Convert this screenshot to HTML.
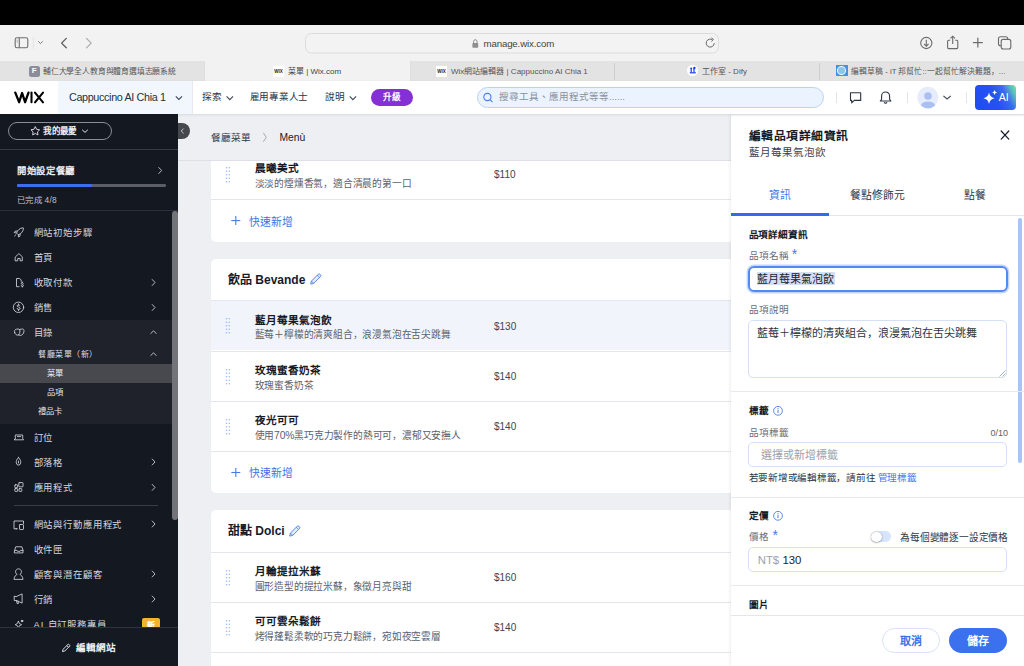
<!DOCTYPE html>
<html lang="zh-TW">
<head>
<meta charset="utf-8">
<style>
*{margin:0;padding:0;box-sizing:border-box}
html,body{width:1024px;height:666px;overflow:hidden;background:#000}
body{font-family:"Liberation Sans",sans-serif;position:relative;color:#1a1d26;text-spacing-trim:space-all}
.a{position:absolute;white-space:nowrap}
.t{position:absolute;white-space:nowrap;height:16px;line-height:16px;transform:translateY(0.7px)}
svg{position:absolute;overflow:visible}
#topblack{left:0;top:0;width:1024px;height:25px;background:#000}
#toolbar{left:0;top:25px;width:1024px;height:36px;background:#f3f2f2}
#tabs{left:0;top:61px;width:1024px;height:20px;background:#e4e3e3}
#wixhdr{left:0;top:81px;width:1024px;height:33px;background:#fff;z-index:5;box-shadow:0 1px 2.5px rgba(20,30,50,0.10)}
#sidebar{left:0;top:114px;width:178px;height:552px;background:#141821;overflow:hidden}
#main{left:178px;top:114px;width:553px;height:552px;background:#edeff3;overflow:hidden}
#panel{left:731px;top:114px;width:293px;height:552px;background:#fff;overflow:hidden;box-shadow:-1px 0 3px rgba(0,0,0,0.08)}
.tab{position:absolute;top:0;height:20px;font-size:8px;color:#555}
.tabsep{position:absolute;top:2px;width:1px;height:17px;background:#cfcfcf}
.sbi{color:#d3d6dc;font-size:9.4px;letter-spacing:0.85px}
.chev{color:#c9ccd2}
.card{position:absolute;left:33px;width:560px;background:#fff;border-radius:5px}
.row{position:absolute;left:0;width:560px;height:50px;border-top:1px solid #e3e6ec}
.nm{font-size:10.6px;font-weight:bold;color:#161b2a}
.ds{font-size:9.7px;color:#5b606b;letter-spacing:-0.2px}
.pr{font-size:10px;color:#3e4350}
.lbl{font-size:9.6px;color:#686d78}
.sec{font-size:9.6px;font-weight:bold;color:#161b2a}
.hsep{position:absolute;left:0;width:293px;height:1px;background:#e6e9ef}
</style>
</head>
<body>
<div class="a" id="topblack"></div>

<!-- Safari toolbar -->
<div class="a" id="toolbar">
  <svg style="left:0;top:0" width="1024" height="36">
    <!-- sidebar icon -->
    <rect x="15.2" y="12.8" width="12.6" height="10" rx="1.8" fill="none" stroke="#6e6e6e" stroke-width="1.1"/>
    <line x1="19.3" y1="12.8" x2="19.3" y2="22.8" stroke="#6e6e6e" stroke-width="1.1"/>
    <line x1="16.6" y1="15.2" x2="18" y2="15.2" stroke="#8a8a8a" stroke-width="0.7"/>
    <line x1="16.6" y1="17" x2="18" y2="17" stroke="#8a8a8a" stroke-width="0.7"/>
    <line x1="33.3" y1="12" x2="33.3" y2="24" stroke="#e0e0e0" stroke-width="0.8"/>
    <polyline points="38.2,16.3 40.5,18.6 42.8,16.3" fill="none" stroke="#7a7a80" stroke-width="1"/>
    <!-- back / forward -->
    <polyline points="66.3,13.4 61.6,18.1 66.3,22.8" fill="none" stroke="#5a5a5a" stroke-width="1.3" stroke-linejoin="round" stroke-linecap="round"/>
    <polyline points="86.5,13.4 91.2,18.1 86.5,22.8" fill="none" stroke="#a8a8a8" stroke-width="1.1" stroke-linejoin="round" stroke-linecap="round"/>
    <!-- address bar -->
    <rect x="305.5" y="8.5" width="413" height="19.5" rx="6" fill="#f4f3f3" stroke="#dddcdc" stroke-width="1"/>
    <!-- lock -->
    <rect x="472.4" y="18" width="5.8" height="4.8" rx="0.8" fill="#8e8e8e"/>
    <path d="M473.6 18 v-1.6 a1.7 1.7 0 0 1 3.4 0 v1.6" fill="none" stroke="#8e8e8e" stroke-width="1"/>
    <!-- reload -->
    <path d="M714.2 18.2 a4 4 0 1 1 -1.6 -3.3" fill="none" stroke="#6a6a6a" stroke-width="1"/>
    <polyline points="711.4,12.6 713.4,14.6 711.4,16.4" fill="none" stroke="#6a6a6a" stroke-width="1"/>
    <!-- download -->
    <circle cx="926.3" cy="18" r="5.6" fill="none" stroke="#6a6a6a" stroke-width="1.1"/>
    <line x1="926.3" y1="14.8" x2="926.3" y2="21" stroke="#6a6a6a" stroke-width="1.1"/>
    <polyline points="924,18.8 926.3,21.1 928.6,18.8" fill="none" stroke="#6a6a6a" stroke-width="1.1"/>
    <!-- share -->
    <path d="M950.2 15.2 h-1.6 a1 1 0 0 0 -1 1 v6.4 a1 1 0 0 0 1 1 h8.2 a1 1 0 0 0 1 -1 v-6.4 a1 1 0 0 0 -1 -1 h-1.6" fill="none" stroke="#6a6a6a" stroke-width="1.1"/>
    <line x1="952.7" y1="11.2" x2="952.7" y2="19" stroke="#6a6a6a" stroke-width="1.1"/>
    <polyline points="950.5,13.4 952.7,11.2 954.9,13.4" fill="none" stroke="#6a6a6a" stroke-width="1.1"/>
    <!-- plus -->
    <line x1="972.9" y1="17.6" x2="982.8" y2="17.6" stroke="#6a6a6a" stroke-width="1.2"/>
    <line x1="977.85" y1="12.8" x2="977.85" y2="22.4" stroke="#6a6a6a" stroke-width="1.2"/>
    <!-- tabs overview -->
    <rect x="998.5" y="11.8" width="9.2" height="9" rx="2" fill="none" stroke="#6a6a6a" stroke-width="1.1"/>
    <rect x="1001.2" y="14.4" width="9.6" height="9.6" rx="2" fill="#f3f2f2" stroke="#6a6a6a" stroke-width="1.1"/>
  </svg>
  <div class="t" style="left:483.5px;top:10.4px;font-size:9.7px;letter-spacing:-0.15px;color:#444">manage.wix.com</div>
</div>

<!-- Tabs -->
<div class="a" id="tabs">
  <div class="a" style="left:205px;top:0;width:204.5px;height:20px;background:#f3f2f2;box-shadow:-0.5px 0 0 #d9d9d9,0.5px 0 0 #d9d9d9"></div>
  <div class="tabsep" style="left:614px"></div>
  <div class="tabsep" style="left:819px"></div>
  <div class="a" style="left:29px;top:5px;width:10.5px;height:10.5px;border-radius:2.5px;background:#8b8b99;color:#fff;font-size:8px;font-weight:bold;line-height:10.5px;text-align:center">F</div>
  <div class="t" style="left:43px;top:2.3px;font-size:7.8px;letter-spacing:-0.18px;color:#555">輔仁大學全人教育與體育選填志願系統</div>
  <div class="a" style="left:273px;top:4.5px;width:11px;height:11px;background:#fff;font-size:4.5px;font-weight:bold;line-height:11px;text-align:center;color:#222">WIX</div>
  <div class="t" style="left:288px;top:2.3px;font-size:8px;color:#444">菜單 | Wix.com</div>
  <div class="a" style="left:436px;top:4.5px;width:11px;height:11px;background:#fff;font-size:4.5px;font-weight:bold;line-height:11px;text-align:center;color:#222">WIX</div>
  <div class="t" style="left:451px;top:2.3px;font-size:8px;color:#555">Wix網站編輯器 | Cappuccino AI Chia 1</div>
  <div class="a" style="left:687px;top:4.3px;width:10.6px;height:10.6px;border-radius:50%;background:#fff"><svg style="left:0;top:0" width="11" height="11"><g fill="#1f3df2"><rect x="2.8" y="7.2" width="6" height="1.2"/><rect x="3.6" y="4.2" width="1.2" height="3.2"/><rect x="6.4" y="3.2" width="1.2" height="4.2"/><circle cx="4.2" cy="3.6" r="1"/><circle cx="7.4" cy="3" r="1.2"/></g></svg></div>
  <div class="t" style="left:702px;top:2.3px;font-size:8px;color:#555">工作室 - Dify</div>
  <div class="a" style="left:836.3px;top:4px;width:11.6px;height:11.4px;background:#3f95e3"><div class="a" style="left:1.2px;top:1.4px;width:9px;height:8.6px;border-radius:50%;background:#8cc5f0;border:1.2px solid #f4f9fd"></div></div>
  <div class="t" style="left:851px;top:2.3px;font-size:7.8px;color:#555">編輯草稿 - iT 邦幫忙::一起幫忙解決難題<span lang="zh-CN">，</span>...</div>
</div>

<!-- Wix header -->
<div class="a" id="wixhdr">
  <svg style="left:0;top:0" width="60" height="33"><g fill="none" stroke="#000" stroke-width="2.1" stroke-linecap="round" stroke-linejoin="round"><path d="M15.3 11.6 L19.1 21.2 L22.1 12 L25.1 21.2 L28.5 11.6" stroke-width="2.3"/><path d="M31.5 11.5 V21.3"/><path d="M35 11.6 L43 21.3 M43 11.6 L35 21.3"/></g></svg>
  <div class="a" style="left:58px;top:0;width:135px;height:33px;background:#f2f7fd;border-right:1px solid #e6e9ee"></div>
  <div class="t" style="left:69px;top:7px;font-size:10.8px;letter-spacing:-0.36px;color:#243142">Cappuccino AI Chia 1</div>
  <svg style="left:0;top:0" width="1024" height="33">
    <polyline points="175.8,15.4 178.9,18.5 182,15.4" fill="none" stroke="#3d4757" stroke-width="1.1"/>
    <polyline points="226.6,15.4 229.8,18.6 233,15.4" fill="none" stroke="#3d4757" stroke-width="1.1"/>
    <polyline points="349.7,15.4 352.9,18.6 356.1,15.4" fill="none" stroke="#3d4757" stroke-width="1.1"/>
  </svg>
  <div class="t" style="left:201.5px;top:7.3px;font-size:9.6px;color:#2a3646">探索</div>
  <div class="t" style="left:249.5px;top:7.3px;font-size:9.6px;letter-spacing:-0.22px;color:#2a3646">雇用專業人士</div>
  <div class="t" style="left:324.5px;top:7.3px;font-size:9.6px;color:#2a3646">說明</div>
  <div class="a" style="left:370.5px;top:8px;width:42px;height:17.4px;border-radius:9px;background:#8530d4;color:#fff;font-size:8.6px;font-weight:bold;line-height:17.4px;text-align:center">升級</div>
  <!-- search -->
  <div class="a" style="left:477px;top:6px;width:347px;height:21px;border-radius:11px;background:#eaf3fe;border:1px solid #b9d2f6"></div>
  <svg style="left:0;top:0" width="1024" height="33">
    <circle cx="487.4" cy="16" r="3.6" fill="none" stroke="#4a7df0" stroke-width="1.1"/>
    <line x1="490" y1="18.6" x2="492.5" y2="21.1" stroke="#4a7df0" stroke-width="1.1"/>
  </svg>
  <div class="t" style="left:499px;top:7.3px;font-size:9.6px;color:#8b909a">搜尋工具、應用程式等等......</div>
  <!-- right icons -->
  <div class="a" style="left:835.5px;top:11px;width:1px;height:11px;background:#e3e5ea"></div>
  <div class="a" style="left:906.5px;top:11px;width:1px;height:11px;background:#e3e5ea"></div>
  <div class="a" style="left:966.3px;top:11px;width:1px;height:11px;background:#e3e5ea"></div>
  <svg style="left:0;top:0" width="1024" height="33">
    <path d="M850.5 11.8 h10.2 v7.6 h-6.4 l-2.6 2.4 v-2.4 h-1.2 z" fill="none" stroke="#2a3242" stroke-width="1.1" stroke-linejoin="round"/>
    <path d="M880.3 20 h10.6 l-1.3 -1.8 v-3.2 a3.7 3.7 0 0 0 -8 0 v3.2 z" fill="none" stroke="#2a3242" stroke-width="1.1" stroke-linejoin="round"/>
    <path d="M884.2 21.2 a1.5 1.5 0 0 0 2.8 0" fill="none" stroke="#2a3242" stroke-width="1.1"/>
    <circle cx="927.9" cy="16.3" r="10.6" fill="#e6ecfb"/>
    <circle cx="928" cy="15" r="3.8" fill="#aac0f3"/>
    <path d="M920.8 24.6 a7.4 5.2 0 0 1 14.4 0 a10.6 10.6 0 0 1 -14.4 0 z" fill="#aac0f3"/>
    <polyline points="943.4,14.8 947.1,18 950.8,14.8" fill="none" stroke="#3d4757" stroke-width="1.1"/>
  </svg>
  <div class="a" style="left:975px;top:4px;width:41px;height:25px;border-radius:4px;background:linear-gradient(62deg,#1f4bf0 0%,#2453f2 50%,#3a6af0 72%,#5fc9b8 90%,#74e39a 100%)"></div>
  <svg style="left:0;top:0" width="1024" height="33">
    <path d="M989 11.6 q0.9 4.9 5.6 5.6 q-4.7 0.8 -5.6 5.7 q-0.9 -4.9 -5.6 -5.7 q4.7 -0.7 5.6 -5.6 z" fill="#fff"/>
    <path d="M994.6 9 q0.4 2.2 2.5 2.5 q-2.1 0.4 -2.5 2.5 q-0.4 -2.1 -2.5 -2.5 q2.1 -0.3 2.5 -2.5 z" fill="#fff"/>
  </svg>
  <div class="t" style="left:998.8px;top:6.8px;font-size:10.5px;color:#fff">AI</div>
</div>

<!-- Sidebar -->
<div class="a" id="sidebar">
  <div class="a" style="left:8px;top:8.2px;width:103.6px;height:17.6px;border:1px solid #8a8d94;border-radius:9px"></div>
  <svg style="left:0;top:0" width="178" height="552">
    <path d="M35.3 12.6 l1.35 2.75 3 .44 -2.17 2.12 .51 3 -2.69 -1.42 -2.69 1.42 .51 -3 -2.17 -2.12 3 -.44 z" fill="none" stroke="#e4e6ea" stroke-width="0.9" stroke-linejoin="round"/>
    <polyline points="82.2,15.8 85,18.4 87.8,15.8" fill="none" stroke="#e4e6ea" stroke-width="1"/>
  </svg>
  <div class="t" style="left:43.3px;top:7.9px;font-size:8.6px;letter-spacing:-0.6px;font-weight:bold;color:#eceef2">我的最愛</div>
  <div class="a" style="left:0;top:35px;width:178px;height:1px;background:#373a43"></div>
  <div class="t" style="left:17px;top:48px;font-size:9.4px;letter-spacing:0.7px;font-weight:bold;color:#eceef2">開始設定餐廳</div>
  <div class="a" style="left:17px;top:70.3px;width:149px;height:2.6px;border-radius:1.3px;background:#5b5e66"></div>
  <div class="a" style="left:17px;top:70.3px;width:75px;height:2.6px;border-radius:1.3px;background:#3d6ef2"></div>
  <div class="t" style="left:17px;top:76.6px;font-size:8.4px;letter-spacing:0.3px;color:#bfc2c9">已完成 4/8</div>
  <div class="a" style="left:0;top:96px;width:178px;height:1px;background:#2b2e37"></div>

  <div class="a" style="left:0;top:206px;width:172px;height:103.5px;background:#1f222b"></div>
  <div class="a" style="left:0;top:250px;width:172px;height:18.5px;background:#47494f"></div>

  <div class="t sbi" style="left:33.6px;top:109.5px">網站初始步驟</div>
  <div class="t sbi" style="left:33.6px;top:134.5px">首頁</div>
  <div class="t sbi" style="left:33.6px;top:159.5px">收取付款</div>
  <div class="t sbi" style="left:33.6px;top:184.5px">銷售</div>
  <div class="t sbi" style="left:33.6px;top:209.5px">目錄</div>
  <div class="t" style="left:38px;top:232.3px;font-size:8px;letter-spacing:0.5px;color:#dcdfe5">餐廳菜單（新）</div>
  <div class="t" style="left:47px;top:250.3px;font-size:8.3px;color:#eef0f3">菜單</div>
  <div class="t" style="left:47px;top:269.3px;font-size:8.3px;color:#e4e6ea">品項</div>
  <div class="t" style="left:38px;top:288.0px;font-size:8.3px;color:#e4e6ea">禮品卡</div>
  <div class="t sbi" style="left:33.6px;top:314.5px">訂位</div>
  <div class="t sbi" style="left:33.6px;top:339.5px">部落格</div>
  <div class="t sbi" style="left:33.6px;top:364.9px">應用程式</div>
  <div class="a" style="left:14px;top:391px;width:144px;height:1px;background:#3a3d46"></div>
  <div class="t sbi" style="left:33.6px;top:401.5px">網站與行動應用程式</div>
  <div class="t sbi" style="left:33.6px;top:426.8px">收件匣</div>
  <div class="t sbi" style="left:33.6px;top:451.5px">顧客與潛在顧客</div>
  <div class="t sbi" style="left:33.6px;top:476.5px">行銷</div>
  <div class="t sbi" style="left:33.6px;top:501.5px">AI 自訂服務專員</div>
  <div class="a" style="left:142px;top:504.4px;width:17.7px;height:15px;border-radius:2px;background:#f1b52b;color:#fff;font-size:8px;font-weight:bold;line-height:15px;text-align:center">新</div>

  <svg style="left:0;top:0" width="178" height="552">
    <g fill="none" stroke="#d4d7dd" stroke-width="0.85" stroke-linecap="round" stroke-linejoin="round">
      <!-- chevrons right -->
      <polyline points="158.8,53.5 161.6,56.5 158.8,59.5"/>
      <polyline points="152.2,165.5 155,168.5 152.2,171.5"/>
      <polyline points="152.2,190.5 155,193.5 152.2,196.5"/>
      <polyline points="152.2,345 155,348 152.2,351"/>
      <polyline points="152.2,370.4 155,373.4 152.2,376.4"/>
      <polyline points="152.2,407 155,410 152.2,413"/>
      <polyline points="152.2,457 155,460 152.2,463"/>
      <polyline points="152.2,482 155,485 152.2,488"/>
      <!-- chevrons up -->
      <polyline points="150.8,219.5 153.5,216.8 156.2,219.5"/>
      <polyline points="150.8,241.5 153.5,238.8 156.2,241.5"/>
      <!-- rocket -->
      <path d="M22.8 113.8 c-3.2 .3 -5.3 2.3 -6.2 5.3 l1.6 1.6 c3 -.9 5 -3 5.3 -6.2 z"/>
      <path d="M16.9 117 l-1.9 .3 -.8 1.4 1.9 .1 M20.2 120.3 l-.3 1.9 -1.4 .8 -.1 -1.9 M14.6 122 l1.3 -1.3"/>
      <!-- home -->
      <path d="M15.5 142.8 L18.9 139.6 L22.3 142.8 V146.8 H20.1 V144.5 H17.7 V146.8 H15.5 Z"/>
      <!-- payments doc $ -->
      <path d="M21.2 167.4 v-1.4 l-1.5 -1.5 h-3.2 v8.2 h2.6"/>
      <path d="M23.3 169.2 a1.1 1 0 0 0 -2.1 .3 c0 1 2.2 .7 2.2 1.8 a1.1 1 0 0 1 -2.2 .2 M22.3 168 v.8 M22.3 172.3 v.8"/>
      <!-- sales circle $ -->
      <circle cx="18.5" cy="193.3" r="5.2"/>
      <path d="M19.9 191.6 a1.5 1.2 0 0 0 -2.8 .3 c0 1.3 3 .9 3 2.3 a1.5 1.2 0 0 1 -3 .2 M18.5 190 v1 M18.5 195.7 v1"/>
      <!-- catalog -->
      <path d="M14.6 218.4 c-.6 -1.6 .4 -3 1.8 -3.2 l1.6 -.2 c1.2 -.1 2 .8 1.9 2 l-.2 2.4 c-.1 1.2 -1.1 1.9 -2.3 1.7 l-.8 -.2 c-1 -.3 -1.6 -1.3 -2 -2.5 z"/>
      <path d="M19.4 215.6 l2.4 -.6 c1.2 -.3 2.2 .5 2.2 1.7 c0 1.6 -.8 3.6 -2.2 4.3 l-1.2 .5 c-1 .3 -1.9 -.1 -2.2 -1"/>
      <!-- booking -->
      <path d="M14.4 325.8 h9.2 l-.9 -1.2 v-3.6 h-7.4 v3.6 z M17.4 322.6 h3.2"/>
      <!-- blog pen nib -->
      <path d="M18.5 343.5 c-2 2.2 -2.5 3.8 -2.2 5.5 l1.2 2 h2 l1.2 -2 c.3 -1.7 -.2 -3.3 -2.2 -5.5 z M18.5 347 v2"/>
      <!-- apps grid -->
      <rect x="14.8" y="370.8" width="2.8" height="2.8" rx=".5"/>
      <rect x="18.8" y="368.6" width="4.2" height="4.2" rx=".5"/>
      <rect x="14.8" y="374.6" width="2.8" height="2.8" rx=".5"/>
      <rect x="19" y="374.6" width="2.8" height="2.8" rx=".5"/>
      <!-- site & mobile -->
      <path d="M17 414.8 h-3 v-7.8 h9.5 v2.5 M16 414.8 h1"/>
      <rect x="19.5" y="410.5" width="4" height="5" rx=".6"/>
      <!-- inbox -->
      <path d="M14.6 436.4 l1.1 -3.6 h6.2 l1.1 3.6 v2.5 h-8.4 z M14.6 436.4 h2.4 l.5 .9 h2.6 l.5 -.9 h2.4"/>
      <!-- contacts -->
      <path d="M14 465 c.4 -3 2.2 -4.3 3.2 -4.5 c-1.3 -.8 -1.8 -2 -1.6 -3.2 c.3 -1.6 1.6 -2.5 2.9 -2.5 c1.3 0 2.6 .9 2.9 2.5 c.2 1.2 -.3 2.4 -1.6 3.2 c1 .2 2.8 1.5 3.2 4.5 z"/>
      <!-- marketing megaphone -->
      <path d="M14.2 482.5 v4 h2.3 l5.6 2.6 v-9.2 l-5.6 2.6 z M16.4 486.5 l.7 3 h1.3 l-.4 -2.4"/>
      <!-- AI sparkle -->
      <path d="M18.4 507.4 q.5 2.9 3.2 3.3 q-2.7 .4 -3.2 3.3 q-.5 -2.9 -3.2 -3.3 q2.7 -.4 3.2 -3.3 z"/>
      <circle cx="22" cy="507" r=".8" fill="#d4d7dd"/>
      <!-- pencil footer -->
      <path d="M62.5 537.6 l.5 -2.2 5.3 -5.3 1.7 1.7 -5.3 5.3 z M66.8 531.6 l1.7 1.7"/>
    </g>
  </svg>

  <div class="a" style="left:0;top:513.4px;width:178px;height:39px;background:#151922;border-top:1px solid #30333b"></div>
  <svg style="left:0;top:0" width="178" height="552">
    <path d="M62.5 537.6 l.6 -2.3 5.3 -5.3 1.7 1.7 -5.3 5.3 z M66.8 531.6 l1.7 1.7" fill="none" stroke="#e4e6ea" stroke-width="0.95" stroke-linejoin="round"/>
  </svg>
  <div class="t" style="left:76px;top:524.6px;font-size:9.6px;font-weight:bold;color:#eef0f3">編輯網站</div>
  <div class="a" style="left:172.2px;top:97px;width:5.8px;height:308.5px;border-radius:2.9px;background:#737479"></div>
</div>

<!-- Main -->
<div class="a" id="main">
  <!-- card 1 (clipped top) -->
  <div class="card" style="top:-50px;height:178px">
    <div class="row" style="top:35px;border-top:none">
    </div>
    <div class="row" style="top:85px;border-top:1px solid transparent">
      <svg style="left:0;top:0.2px" width="30" height="50"><g fill="#9dbaf2"><circle cx="15.5" cy="17.7" r="0.8"/><circle cx="18.3" cy="17.7" r="0.8"/><circle cx="15.5" cy="21.2" r="0.8"/><circle cx="18.3" cy="21.2" r="0.8"/><circle cx="15.5" cy="24.7" r="0.8"/><circle cx="18.3" cy="24.7" r="0.8"/><circle cx="15.5" cy="28.2" r="0.8"/><circle cx="18.3" cy="28.2" r="0.8"/><circle cx="15.5" cy="31.7" r="0.8"/><circle cx="18.3" cy="31.7" r="0.8"/></g></svg>
      <div class="t nm" style="left:43.5px;top:9.4px">晨曦美式</div>
      <div class="t ds" style="left:43.5px;top:25.2px">淡淡的煙燻香氣<span lang="zh-CN">，</span>適合清晨的第一口</div>
      <div class="t pr" style="left:283px;top:16.3px">$110</div>
    </div>
    <div class="a" style="left:0;top:135px;width:560px;height:1px;background:#e3e6ec"></div>
    <svg style="left:0;top:0" width="80" height="177"><g stroke="#4a7ae6" stroke-width="1.1"><line x1="20.3" y1="156.6" x2="29.3" y2="156.6"/><line x1="24.8" y1="152.1" x2="24.8" y2="161.1"/></g></svg>
    <div class="t" style="left:38px;top:148.6px;font-size:10.8px;color:#3f70e6">快速新增</div>
  </div>
  <!-- card 2 -->
  <div class="card" style="top:144.6px;height:234px">
    <div class="t" style="left:17px;top:12.4px;font-size:12px;line-height:16px;font-weight:bold;color:#161b2a">飲品 Bevande</div>
    <svg style="left:98.8px;top:14.6px" width="12" height="12"><path d="M0.7 11.1 L1.4 8.1 L8.3 1.2 Q9.1 .4 9.9 1.2 L10.6 1.9 Q11.4 2.7 10.6 3.5 L3.7 10.4 Z" fill="#e3ebfc" stroke="#4a7aea" stroke-width="0.9" stroke-linejoin="round"/><path d="M1.5 8.1 L3.7 10.3 M7.3 2.2 L9.6 4.5" stroke="#4a7aea" stroke-width="0.8"/></svg>
  <div class="row" style="top:41.7px;background:#f1f4fb;">
    <svg style="left:0;top:0" width="30" height="50"><g fill="#9dbaf2"><circle cx="15.5" cy="17.7" r="0.8"/><circle cx="18.3" cy="17.7" r="0.8"/><circle cx="15.5" cy="21.2" r="0.8"/><circle cx="18.3" cy="21.2" r="0.8"/><circle cx="15.5" cy="24.7" r="0.8"/><circle cx="18.3" cy="24.7" r="0.8"/><circle cx="15.5" cy="28.2" r="0.8"/><circle cx="18.3" cy="28.2" r="0.8"/><circle cx="15.5" cy="31.7" r="0.8"/><circle cx="18.3" cy="31.7" r="0.8"/></g></svg>
    <div class="t nm" style="left:43.5px;top:9.4px">藍月莓果氣泡飲</div>
    <div class="t ds" style="left:43.5px;top:25.2px">藍莓＋檸檬的清爽組合<span lang="zh-CN">，</span>浪漫氣泡在舌尖跳舞</div>
    <div class="t pr" style="left:283px;top:16.3px">$130</div>
  </div>
  <div class="row" style="top:92px;">
    <svg style="left:0;top:0" width="30" height="50"><g fill="#9dbaf2"><circle cx="15.5" cy="17.7" r="0.8"/><circle cx="18.3" cy="17.7" r="0.8"/><circle cx="15.5" cy="21.2" r="0.8"/><circle cx="18.3" cy="21.2" r="0.8"/><circle cx="15.5" cy="24.7" r="0.8"/><circle cx="18.3" cy="24.7" r="0.8"/><circle cx="15.5" cy="28.2" r="0.8"/><circle cx="18.3" cy="28.2" r="0.8"/><circle cx="15.5" cy="31.7" r="0.8"/><circle cx="18.3" cy="31.7" r="0.8"/></g></svg>
    <div class="t nm" style="left:43.5px;top:9.4px">玫瑰蜜香奶茶</div>
    <div class="t ds" style="left:43.5px;top:25.2px">玫瑰蜜香奶茶</div>
    <div class="t pr" style="left:283px;top:16.3px">$140</div>
  </div>
  <div class="row" style="top:142.2px;">
    <svg style="left:0;top:0" width="30" height="50"><g fill="#9dbaf2"><circle cx="15.5" cy="17.7" r="0.8"/><circle cx="18.3" cy="17.7" r="0.8"/><circle cx="15.5" cy="21.2" r="0.8"/><circle cx="18.3" cy="21.2" r="0.8"/><circle cx="15.5" cy="24.7" r="0.8"/><circle cx="18.3" cy="24.7" r="0.8"/><circle cx="15.5" cy="28.2" r="0.8"/><circle cx="18.3" cy="28.2" r="0.8"/><circle cx="15.5" cy="31.7" r="0.8"/><circle cx="18.3" cy="31.7" r="0.8"/></g></svg>
    <div class="t nm" style="left:43.5px;top:9.4px">夜光可可</div>
    <div class="t ds" style="left:43.5px;top:25.2px">使用<span style="font-size:10.3px">70%</span>黑巧克力製作的熱可可<span lang="zh-CN">，</span>濃郁又安撫人</div>
    <div class="t pr" style="left:283px;top:16.3px">$140</div>
  </div>

    <div class="a" style="left:0;top:192.6px;width:560px;height:1px;background:#e3e6ec"></div>
    <svg style="left:0;top:0" width="80" height="234"><g stroke="#4a7ae6" stroke-width="1.1"><line x1="20.3" y1="213.5" x2="29.3" y2="213.5"/><line x1="24.8" y1="209" x2="24.8" y2="218"/></g></svg>
    <div class="t" style="left:38px;top:205.5px;font-size:10.8px;color:#3f70e6">快速新增</div>
  </div>
  <!-- card 3 -->
  <div class="card" style="top:396px;height:300px">
    <div class="t" style="left:17px;top:12px;font-size:12px;line-height:16px;font-weight:bold;color:#161b2a">甜點 Dolci</div>
    <svg style="left:78.0px;top:14.6px" width="12" height="12"><path d="M0.7 11.1 L1.4 8.1 L8.3 1.2 Q9.1 .4 9.9 1.2 L10.6 1.9 Q11.4 2.7 10.6 3.5 L3.7 10.4 Z" fill="#e3ebfc" stroke="#4a7aea" stroke-width="0.9" stroke-linejoin="round"/><path d="M1.5 8.1 L3.7 10.3 M7.3 2.2 L9.6 4.5" stroke="#4a7aea" stroke-width="0.8"/></svg>
  <div class="row" style="top:42px;">
    <svg style="left:0;top:0" width="30" height="50"><g fill="#9dbaf2"><circle cx="15.5" cy="17.7" r="0.8"/><circle cx="18.3" cy="17.7" r="0.8"/><circle cx="15.5" cy="21.2" r="0.8"/><circle cx="18.3" cy="21.2" r="0.8"/><circle cx="15.5" cy="24.7" r="0.8"/><circle cx="18.3" cy="24.7" r="0.8"/><circle cx="15.5" cy="28.2" r="0.8"/><circle cx="18.3" cy="28.2" r="0.8"/><circle cx="15.5" cy="31.7" r="0.8"/><circle cx="18.3" cy="31.7" r="0.8"/></g></svg>
    <div class="t nm" style="left:43.5px;top:9.4px">月輪提拉米蘇</div>
    <div class="t ds" style="left:43.5px;top:25.2px">圓形造型的提拉米蘇<span lang="zh-CN">，</span>象徵月亮與甜</div>
    <div class="t pr" style="left:283px;top:16.3px">$160</div>
  </div>
  <div class="row" style="top:92px;">
    <svg style="left:0;top:0" width="30" height="50"><g fill="#9dbaf2"><circle cx="15.5" cy="17.7" r="0.8"/><circle cx="18.3" cy="17.7" r="0.8"/><circle cx="15.5" cy="21.2" r="0.8"/><circle cx="18.3" cy="21.2" r="0.8"/><circle cx="15.5" cy="24.7" r="0.8"/><circle cx="18.3" cy="24.7" r="0.8"/><circle cx="15.5" cy="28.2" r="0.8"/><circle cx="18.3" cy="28.2" r="0.8"/><circle cx="15.5" cy="31.7" r="0.8"/><circle cx="18.3" cy="31.7" r="0.8"/></g></svg>
    <div class="t nm" style="left:43.5px;top:9.4px">可可雲朵鬆餅</div>
    <div class="t ds" style="left:43.5px;top:25.2px">烤得蓬鬆柔軟的巧克力鬆餅<span lang="zh-CN">，</span>宛如夜空雲層</div>
    <div class="t pr" style="left:283px;top:16.3px">$140</div>
  </div>
  <div class="row" style="top:142.3px;">
    <svg style="left:0;top:0" width="30" height="50"><g fill="#9dbaf2"><circle cx="15.5" cy="17.7" r="0.8"/><circle cx="18.3" cy="17.7" r="0.8"/><circle cx="15.5" cy="21.2" r="0.8"/><circle cx="18.3" cy="21.2" r="0.8"/><circle cx="15.5" cy="24.7" r="0.8"/><circle cx="18.3" cy="24.7" r="0.8"/><circle cx="15.5" cy="28.2" r="0.8"/><circle cx="18.3" cy="28.2" r="0.8"/><circle cx="15.5" cy="31.7" r="0.8"/><circle cx="18.3" cy="31.7" r="0.8"/></g></svg>
    <div class="t nm" style="left:43.5px;top:9.4px"></div>
    <div class="t ds" style="left:43.5px;top:25.2px"></div>
    <div class="t pr" style="left:283px;top:16.3px"></div>
  </div>

  </div>
  <!-- breadcrumb header -->
  <div class="a" style="left:0;top:0;width:553px;height:47px;background:#edeff3;border-bottom:1px solid #dde0e6"></div>
  <div class="t" style="left:33px;top:14.7px;font-size:9.6px;color:#2f3645">餐廳菜單</div>
  <svg style="left:0;top:0" width="553" height="46"><polyline points="85.3,18.8 88.3,23.3 85.3,27.8" fill="none" stroke="#9ba1ab" stroke-width="0.9"/></svg>
  <div class="t" style="left:101.5px;top:15.4px;font-size:10.3px;color:#161b2a">Menù</div>
  <!-- collapse button -->
  <div class="a" style="left:-1px;top:8.8px;width:13px;height:16.2px;border-radius:0 8.1px 8.1px 0;background:#46484e"></div>
  <svg style="left:0;top:0" width="20" height="40"><polyline points="5.6,14.6 3.2,17 5.6,19.4" fill="none" stroke="#d4d6da" stroke-width="0.9"/></svg>
</div>

<!-- Right panel -->
<div class="a" id="panel">
  <div class="a" style="left:0;top:0;width:293px;height:2px;background:linear-gradient(#e6e8ec,#fff)"></div>
  <div class="t" style="left:17.8px;top:12.8px;font-size:11.8px;letter-spacing:0.5px;font-weight:bold;color:#161b2a">編輯品項詳細資訊</div>
  <div class="t" style="left:17.8px;top:29.4px;font-size:10.6px;color:#3b4150">藍月莓果氣泡飲</div>
  <svg style="left:0;top:0" width="293" height="552"><g stroke="#161b2a" stroke-width="1.2" stroke-linecap="round"><line x1="270.2" y1="17" x2="277.8" y2="25.1"/><line x1="277.8" y1="17" x2="270.2" y2="25.1"/></g></svg>
  <div class="t" style="left:38.4px;top:72px;font-size:10.8px;color:#3e79ee">資訊</div>
  <div class="t" style="left:119.3px;top:72px;font-size:10.8px;color:#2f3645">餐點修飾元</div>
  <div class="t" style="left:233.2px;top:72px;font-size:10.8px;color:#2f3645">點餐</div>
  <div class="a" style="left:0;top:100.9px;width:293px;height:1px;background:#e3e6ec"></div>
  <div class="a" style="left:0;top:99.2px;width:98px;height:2.4px;background:#2f6bea"></div>
  <div class="a" style="left:286.9px;top:104px;width:4px;height:245px;border-radius:2px;background:#a9c3f6"></div>

  <div class="t sec" style="left:17.5px;top:112.3px;letter-spacing:-0.2px">品項詳細資訊</div>
  <div class="t lbl" style="left:17.5px;top:132.6px">品項名稱</div>
  <div class="t" style="left:60.8px;top:131.4px;font-size:14px;color:#3e79ee">*</div>
  <div class="a" style="left:16.6px;top:151.8px;width:260.2px;height:25.8px;border-radius:6px;border:2px solid #5289f4;box-shadow:0 0 0 1.4px #c2d6fb"></div>
  <div class="a" style="left:26.2px;top:157.9px;width:78px;height:13.5px;background:#d3dff6"></div>
  <div class="t" style="left:26.2px;top:155.7px;font-size:11px;color:#1e2330">藍月莓果氣泡飲</div>

  <div class="t lbl" style="left:17.5px;top:187.1px">品項說明</div>
  <div class="a" style="left:17.2px;top:206.4px;width:259px;height:57.8px;border-radius:5px;border:1px solid #d3e0f8"></div>
  <div class="t" style="left:25.7px;top:210.3px;font-size:11px;color:#2e3440">藍莓＋檸檬的清爽組合<span lang="zh-CN">，</span>浪漫氣泡在舌尖跳舞</div>
  <svg style="left:0;top:0" width="293" height="552"><g stroke="#8a8f99" stroke-width="0.7"><line x1="268.5" y1="262.5" x2="274.5" y2="256.5"/><line x1="271.5" y1="262.5" x2="274.5" y2="259.5"/></g></svg>
  <div class="hsep" style="top:277.3px"></div>

  <div class="t sec" style="left:17.5px;top:287.9px">標籤</div>
  <svg style="left:0;top:0" width="293" height="552"><g fill="none" stroke="#4a7de8" stroke-width="0.9"><circle cx="47" cy="296.8" r="4.4"/></g><g fill="#4a7de8"><circle cx="47" cy="294.6" r=".6"/><rect x="46.5" y="295.8" width="1" height="3.2"/></g></svg>
  <div class="t lbl" style="left:17.5px;top:309.5px">品項標籤</div>
  <div class="t" style="left:259.5px;top:310.3px;font-size:9px;color:#5b606b">0/10</div>
  <div class="a" style="left:17.2px;top:328.3px;width:259px;height:25.1px;border-radius:5px;border:1px solid #d3e0f8"></div>
  <div class="t" style="left:30px;top:331.8px;font-size:11px;color:#9ca1ab">選擇或新增標籤</div>
  <div class="t" style="left:17.5px;top:355.2px;font-size:9.6px;letter-spacing:-0.25px;color:#2f3645">若要新增或編輯標籤<span lang="zh-CN">，</span>請前往 <span style="color:#3e79ee">管理標籤</span></div>
  <div class="hsep" style="top:382.8px"></div>

  <div class="t sec" style="left:17.5px;top:392.9px">定價</div>
  <svg style="left:0;top:0" width="293" height="552"><g fill="none" stroke="#4a7de8" stroke-width="0.9"><circle cx="47" cy="401.8" r="4.4"/></g><g fill="#4a7de8"><circle cx="47" cy="399.6" r=".6"/><rect x="46.5" y="400.8" width="1" height="3.2"/></g></svg>
  <div class="t lbl" style="left:17.5px;top:413.6px">價格</div>
  <div class="t" style="left:41.4px;top:412.2px;font-size:14px;color:#3e79ee">*</div>
  <div class="a" style="left:140.2px;top:417.4px;width:20.2px;height:11px;border-radius:5.5px;background:#d8e4fb"></div>
  <div class="a" style="left:140.4px;top:417.6px;width:10.6px;height:10.6px;border-radius:50%;background:#fff;box-shadow:0 0.4px 1.6px rgba(0,0,0,0.5)"></div>
  <div class="t" style="left:169.2px;top:415.3px;font-size:9.7px;letter-spacing:-0.2px;color:#2f3645">為每個變體逐一設定價格</div>
  <div class="a" style="left:17.2px;top:433.2px;width:258.7px;height:25.3px;border-radius:5px;border:1px solid #d3e0f8"></div>
  <div class="t" style="left:26.7px;top:436.7px;font-size:11.4px;color:#9ca1ab">NT$ <span style="color:#1e2330">130</span></div>
  <div class="hsep" style="top:471.2px"></div>
  <div class="t sec" style="left:17.5px;top:482.1px">圖片</div>

  <div class="a" style="left:0;top:501.3px;width:293px;height:51px;background:#fff;border-top:1px solid #e3e6ec"></div>
  <div class="a" style="left:151px;top:513.8px;width:58.3px;height:25.5px;border-radius:13px;border:1px solid #d7e3fb;color:#3e6fe6;font-size:11px;font-weight:bold;line-height:24.6px;text-align:center">取消</div>
  <div class="a" style="left:217.8px;top:513.8px;width:58.3px;height:25.5px;border-radius:13px;background:#3b70ef;color:#fff;font-size:11px;font-weight:bold;line-height:26.6px;text-align:center">儲存</div>
</div>
</body>
</html>
